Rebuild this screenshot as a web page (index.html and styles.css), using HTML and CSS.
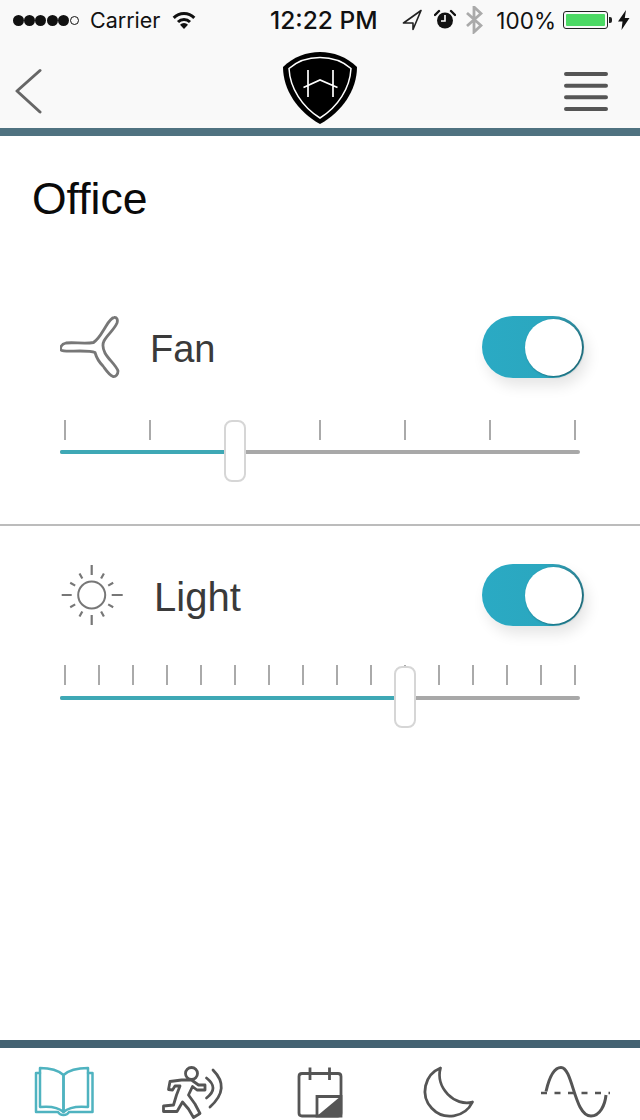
FILE: index.html
```html
<!DOCTYPE html>
<html lang="en">
<head>
    <meta charset="UTF-8">
    <meta name="viewport" content="width=device-width, initial-scale=1.0">
    <title>Office</title>
    <link rel="stylesheet" href="styles.css">
</head>
<body>
    <header class="header">
        <div class="status-bar">
            <div class="status-left">
                <div class="signal">
                    <span class="dot"></span><span class="dot"></span><span class="dot"></span><span class="dot"></span><span class="dot"></span><span class="dot dot-empty"></span>
                </div>
                <span class="carrier">Carrier</span>
                <svg class="wifi" width="24" height="18" viewBox="0 0 24 18">
                    <path d="M1.7 6.9A14.5 14.5 0 0 1 22.3 6.9M6 11A8.5 8.5 0 0 1 18 11" fill="none" stroke="#111" stroke-width="3"/>
                    <path d="M12 18L8 13.8A5.6 5.6 0 0 1 16 13.8Z" fill="#111"/>
                </svg>
            </div>
            <span class="time">12:22 PM</span>
            <div class="status-right">
                <svg width="20" height="22" viewBox="404 9 20 22"><path d="M423 10.500L405.500 23H415V29.500Z" fill="none" stroke="#222" stroke-width="1.6" stroke-linejoin="round"/></svg>
                <svg class="alarm" width="22" height="22" viewBox="436 9 22 22">
                    <circle cx="447" cy="20.500" r="8" fill="#111"/>
                    <path d="M447 15V21H443" fill="none" stroke="#fff" stroke-width="1.6"/>
                    <path d="M437 15L441 11M457 15L453 11" stroke="#111" stroke-width="2.4" stroke-linecap="round"/>
                </svg>
                <svg class="bluetooth" width="18" height="28" viewBox="467 7 18 28"><path d="M469 14L483 26.500L476 33V8L483 14.500L469 27" fill="none" stroke="#aaa" stroke-width="2.8"/></svg>
                <span class="percent">100%</span>
                <div class="battery"><div class="battery-level"></div></div>
                <div class="battery-nib"></div>
                <svg class="bolt" width="12" height="20" viewBox="0 0 12 20"><path d="M8 0L0 11.500H4.500L3.500 20L11.500 8H6.800Z" fill="#111"/></svg>
            </div>
        </div>
        <nav class="nav">
            <svg class="nav-back" width="27" height="88" viewBox="15 40 27 88"><path d="M40 70.500L17 91L40 112" fill="none" stroke="#666" stroke-width="3" stroke-linecap="round" stroke-linejoin="round"/></svg>
            <svg width="76" height="88" viewBox="282 40 76 88">
                <path d="M320 52C333 52 347 57 357 67C357 90 342 112 320 124C298 112 283 90 283 67C293 57 307 52 320 52Z" fill="#000"/>
                <path d="M320 57.500C331 57.500 342 60.500 351 68.500C350 88 338 107 320 118C302 107 290 88 289 68.500C298 60.500 309 57.500 320 57.500Z" fill="none" stroke="#fff" stroke-width="1.500"/>
                <path d="M308 70V97M333 70V97M303.500 87.500L320 80L337.500 87.500" fill="none" stroke="#fff" stroke-width="1.700"/>
            </svg>
            <svg class="nav-menu" width="44" height="88" viewBox="564 40 44 88">
                <path d="M566 74H606M566 85.700H606M566 97.300H606M566 109H606" stroke="#555" stroke-width="4" stroke-linecap="round"/>
            </svg>
        </nav>
    </header>

    <main class="main">
        <h1 class="title">Office</h1>

        <section class="device device-fan">
            <div class="device-row">
                <svg class="device-icon" width="62" height="62" viewBox="60 316 62 62">
                    <path d="M114 317.500C110 318 107 325 103 331C100 336 97 340 93.500 342.500C85 344 73 342 66 343C61 344 60 348 61 350C63 352 72 351 80 351C87 351 92 351 95 352.500C96 356 99 362 103 366C106 370 109 375 113 376.500C116 377 118 374 118 371C116 365 108 359 105 353C102.500 348 102.500 344 104 341C107 335 114 330 117 323C118 320 117 317 114 317.500Z" fill="none" stroke="#777" stroke-width="2.800" stroke-linejoin="round"/>
                </svg>
                <span class="device-name">Fan</span>
                <div class="toggle"><div class="toggle-knob"></div></div>
            </div>
            <div class="slider">
                <div class="ticks">
                    <span class="tick"></span><span class="tick"></span><span class="tick"></span><span class="tick"></span><span class="tick"></span><span class="tick"></span><span class="tick"></span>
                </div>
                <div class="track"><div class="track-fill" style="width: 33.65%"></div></div>
                <div class="handle" style="left: 33.65%"></div>
            </div>
        </section>

        <section class="device device-light">
            <div class="device-row">
                <svg class="device-icon" width="64" height="62" viewBox="60 564 64 62">
                    <circle cx="91.700" cy="595" r="13.500" fill="none" stroke="#777" stroke-width="2"/>
                    <path d="M91.700 565V575M91.700 615V625M61.700 595H71.700M111.700 595H122.700M79.500 573.500L82.300 578.500M101.100 611.500L103.900 616.500M70.200 582.800L75.200 585.600M108.200 604.400L113.200 607.200M103.900 573.500L101.100 578.500M82.300 611.500L79.500 616.500M113.200 582.800L108.200 585.600M75.200 604.400L70.200 607.200" stroke="#777" stroke-width="2.200"/>
                </svg>
                <span class="device-name device-name-light">Light</span>
                <div class="toggle"><div class="toggle-knob"></div></div>
            </div>
            <div class="slider slider-dense">
                <div class="ticks">
                    <span class="tick"></span><span class="tick"></span><span class="tick"></span><span class="tick"></span><span class="tick"></span><span class="tick"></span><span class="tick"></span><span class="tick"></span><span class="tick"></span><span class="tick"></span><span class="tick"></span><span class="tick"></span><span class="tick"></span><span class="tick"></span><span class="tick"></span><span class="tick"></span>
                </div>
                <div class="track"><div class="track-fill" style="width: 66.35%"></div></div>
                <div class="handle" style="left: 66.35%"></div>
            </div>
        </section>
    </main>

    <footer class="tabs">
        <svg width="80" height="72" viewBox="24 1048 80 72">
            <g fill="none" stroke="#4fb3c0" stroke-width="2.500" stroke-linejoin="round" stroke-linecap="round">
                <path d="M40 1068C50 1068 58 1070 63.500 1075V1112C58 1107 50 1106 40 1107Z"/>
                <path d="M88 1068C78 1068 69 1070 63.500 1075V1112C69 1107 78 1106 88 1107Z"/>
                <path d="M40 1073H36V1112H58C60 1116 67 1116 69 1112H92.500V1073H88"/>
            </g>
        </svg>
        <svg width="80" height="72" viewBox="152 1048 80 72">
            <g fill="none" stroke="#555" stroke-width="2.800" stroke-linejoin="round" stroke-linecap="round">
                <circle cx="191.500" cy="1073.500" r="6"/>
                <path d="M181.500 1080L170 1081.500L168.500 1089.500L172.500 1090L175 1086H180L176.500 1095L173.500 1105L163.500 1106V1111.500L177 1111.500L182.500 1102L188.500 1109L193.500 1117.500L200 1113.500L195 1104L188.500 1095L192.500 1086.500L197 1090H205V1085H198.500L191.500 1080Z"/>
                <path d="M206.500 1078Q219.500 1088 206.500 1098M213 1070Q231 1088 210 1107"/>
            </g>
        </svg>
        <svg width="80" height="72" viewBox="280 1048 80 72">
            <path d="M302 1073.500H338C340 1073.500 341 1074.500 341 1076.500V1113C341 1115 340 1116 338 1116H302C300 1116 299 1115 299 1113V1076.500C299 1074.500 300 1073.500 302 1073.500Z" fill="none" stroke="#555" stroke-width="2.800"/>
            <path d="M310 1067.500V1080M329.500 1067.500V1080" stroke="#555" stroke-width="2.800"/>
            <path d="M317 1096.500H341V1116H317Z" fill="#fff" stroke="#555" stroke-width="2.800"/>
            <path d="M341 1096V1116H317Z" fill="#555"/>
        </svg>
        <svg width="80" height="72" viewBox="408 1048 80 72">
            <path d="M440.500 1068A25 25 0 1 0 472.500 1102C455 1107 435 1088 440.500 1068Z" fill="none" stroke="#555" stroke-width="2.800" stroke-linejoin="round"/>
        </svg>
        <svg width="80" height="72" viewBox="536 1048 80 72">
            <path d="M546 1091.500C550 1074 555 1067.500 561 1067.500C573 1067.500 574 1116 591 1116C600 1116 605 1105 606 1095" fill="none" stroke="#555" stroke-width="3"/>
            <path d="M541 1093H610" stroke="#555" stroke-width="2.400" stroke-dasharray="6 7.500"/>
        </svg>
    </footer>
</body>
</html>
```

FILE: styles.css
```css
* {
    box-sizing: border-box;
}

body {
    font-family: 'Liberation Sans', Arial, sans-serif;
    margin: 0;
    width: 640px;
    height: 1120px;
    display: flex;
    flex-direction: column;
    overflow: hidden;
    background: #fff;
    color: #111;
}

svg {
    display: block;
    flex-shrink: 0;
}

.header {
    height: 136px;
    background: #f9f9f9;
    border-bottom: 8px solid #4f7280;
}

.status-bar {
    height: 40px;
    display: flex;
    align-items: center;
    padding: 0 10px 0 13px;
    font-family: 'Inter', sans-serif;
    font-size: 21.500px;
}

.status-left {
    display: flex;
    align-items: center;
    width: 185px;
}

.signal {
    display: flex;
    gap: 0.200px;
}

.dot {
    width: 11px;
    height: 11px;
    border-radius: 50%;
    background: #111;
}

.dot-empty {
    width: 9px;
    height: 9px;
    margin: 1px 0 0 1px;
    background: none;
    border: 1px solid #111;
}

.carrier {
    margin-left: 11px;
}

.wifi {
    margin-left: 12px;
}

.time {
    margin-left: 72px;
    font-size: 24.500px;
    font-weight: 500;
}

.status-right {
    display: flex;
    align-items: center;
    margin-left: auto;
}

.alarm {
    margin-left: 12px;
}

.bluetooth {
    margin-left: 9px;
}

.percent {
    margin-left: 13px;
    font-size: 22.500px;
}

.battery {
    width: 45px;
    height: 18px;
    margin-left: 7px;
    padding: 2px;
    border: 1.500px solid #222;
    border-radius: 3px;
}

.battery-level {
    height: 100%;
    border-radius: 1px;
    background: #4cd964;
}

.battery-nib {
    width: 3px;
    height: 6px;
    margin-left: 1px;
    border-radius: 0 2px 2px 0;
    background: #222;
}

.bolt {
    margin-left: 6px;
}

.nav {
    height: 88px;
    display: grid;
    grid-template-columns: 1fr 76px 1fr;
}

.nav-back {
    margin-left: 15px;
}

.nav-menu {
    justify-self: end;
    margin-right: 32px;
}

.main {
    flex: 1;
}

.title {
    margin: 39px 0 0 32px;
    font-size: 44.500px;
    font-weight: 400;
    line-height: 48px;
    color: #0a0a0a;
}

.device {
    padding: 0 60px;
}

.device-fan {
    height: 208px;
    margin-top: 93px;
}

.device-light {
    padding-top: 38px;
    border-top: 2px solid #bcbcbc;
}

.device-row {
    display: flex;
    align-items: center;
    height: 62px;
    margin-right: -4px;
}

.device-name {
    margin-left: 28px;
    padding-top: 4px;
    font-size: 38px;
    color: #3a3a3a;
}

.device-name-light {
    margin-left: 30px;
    font-size: 40px;
}

.toggle {
    display: flex;
    justify-content: flex-end;
    align-items: center;
    width: 102px;
    height: 62px;
    margin-left: auto;
    padding-right: 2px;
    border-radius: 31px;
    background: linear-gradient(90deg, #2aaac4 0%, #2ba7bf 60%, #2f8496 100%);
    box-shadow: 4px 8px 14px rgba(0,0,0,0.1);
}

.toggle-knob {
    width: 57px;
    height: 57px;
    border-radius: 50%;
    background: #fff;
    box-shadow: 1px 1px 2px rgba(0,60,70,0.5);
}

.slider {
    position: relative;
    margin-top: 42px;
}

.slider-dense {
    margin-top: 39px;
}

.ticks {
    display: flex;
    justify-content: space-between;
    height: 20px;
    padding: 0 4px;
}

.tick {
    width: 2px;
    background: #aaa;
}

.track {
    height: 4px;
    margin-top: 10px;
    border-radius: 2px;
    background: #a8a8a8;
}

.slider-dense .track {
    margin-top: 11px;
}

.track-fill {
    height: 100%;
    border-radius: 2px 0 0 2px;
    background: #3ea8b5;
}

.handle {
    position: absolute;
    top: 0;
    width: 22px;
    height: 62px;
    transform: translateX(-50%);
    border: 2px solid #d6d6d6;
    border-radius: 8px;
    background: #fff;
}

.slider-dense .handle {
    top: 1px;
}

.tabs {
    height: 80px;
    display: grid;
    grid-template-columns: repeat(5, 128px);
    justify-items: center;
    border-top: 8px solid #446272;
}
```
